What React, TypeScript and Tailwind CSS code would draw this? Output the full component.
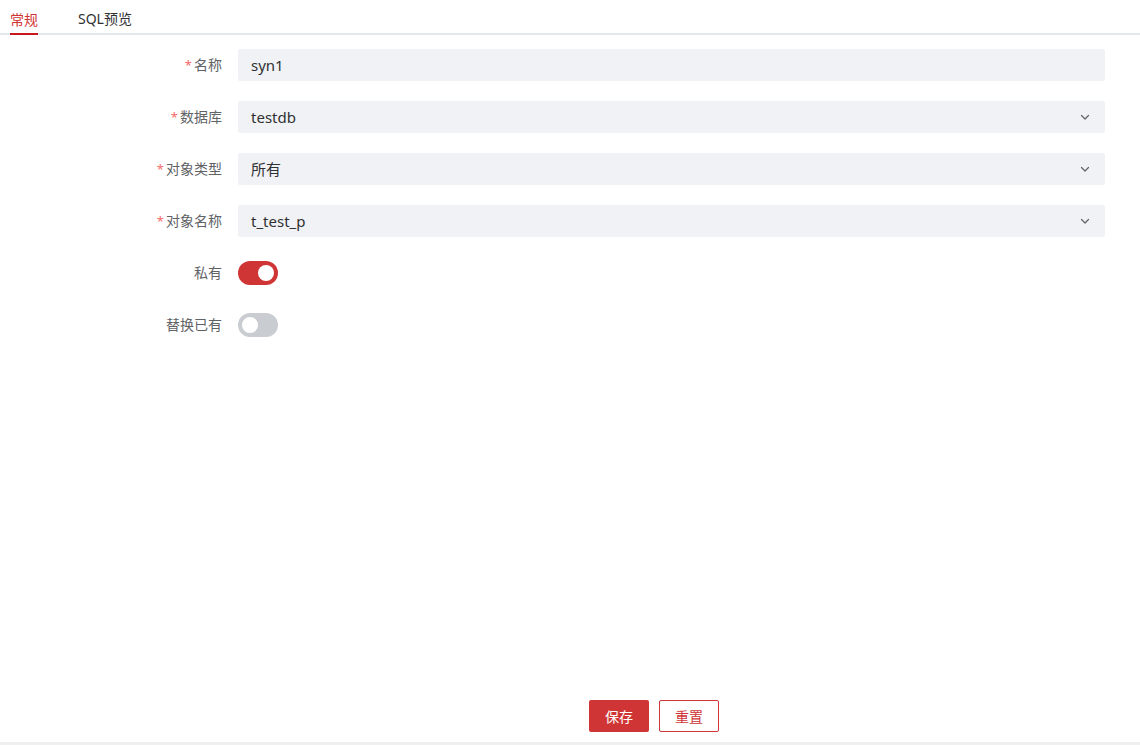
import React from "react";

const Chevron = () => (
  <svg width="12" height="12" viewBox="0 0 12 12" fill="none" className="text-[#606266]">
    <path d="M2.5 4.5 L6 8 L9.5 4.5" stroke="currentColor" strokeWidth="1.2" strokeLinecap="round" strokeLinejoin="round" />
  </svg>
);

function Label({ text, required }: { text: string; required?: boolean }) {
  return (
    <div className="w-[238px] shrink-0 pr-4 flex items-center justify-end text-[14px] text-[#606266] leading-none">
      {required && <span className="text-[#f56c6c] mr-[2px] text-[13px] leading-none">*</span>}
      {text}
    </div>
  );
}

function InputRow({ label, value, select }: { label: string; value: string; select?: boolean }) {
  return (
    <div className="flex h-[32px] mb-[20px]">
      <Label text={label} required />
      <div className="flex-1 h-[32px] bg-[#f0f2f5] rounded-[2px] flex items-center pl-[13px] pr-[14px] text-[15px] text-[#303133] leading-none">
        <span className="flex-1">{value}</span>
        {select && <Chevron />}
      </div>
    </div>
  );
}

function SwitchRow({ label, on }: { label: string; on: boolean }) {
  return (
    <div className="flex h-[32px] mb-[20px] items-center">
      <Label text={label} />
      <div
        className={
          "w-[40px] h-[24px] rounded-full flex items-center px-[4px] " +
          (on ? "bg-[#d03535] justify-end" : "bg-[#c9ccd1] justify-start")
        }
      >
        <div className="w-[16px] h-[16px] rounded-full bg-white" />
      </div>
    </div>
  );
}

export default function App() {
  return (
    <div
      className="w-[1140px] h-[745px] bg-white flex flex-col"
      style={{ fontFamily: '"Noto Sans", "Noto Sans CJK SC", sans-serif' }}
    >
      <div className="h-[35px] border-b-2 border-[#e4e7ed] flex items-end pl-[10px] gap-[40px] text-[14px]">
        <div className="h-[35px] flex items-center text-[#d03535] border-b-2 border-[#c8161d] mb-[-2px] pt-[5px]">常规</div>
        <div className="h-[35px] flex items-center text-[#303133] pt-[5px]">SQL预览</div>
      </div>
      <div className="pt-[14px] pr-[35px]">
        <InputRow label="名称" value="syn1" />
        <InputRow label="数据库" value="testdb" select />
        <InputRow label="对象类型" value="所有" select />
        <InputRow label="对象名称" value="t_test_p" select />
        <SwitchRow label="私有" on />
        <SwitchRow label="替换已有" on={false} />
      </div>
      <div className="flex-1" />
      <div className="flex justify-center gap-[10px] pl-[168px] mb-[10px]">
        <button className="w-[60px] h-[32px] bg-[#d03535] text-white text-[14px] rounded-[2px]">保存</button>
        <button className="w-[60px] h-[32px] bg-white border border-[#d03535] text-[#d03535] text-[14px] rounded-[2px]">重置</button>
      </div>
      <div className="h-[3px] bg-[#f0f0f0]" />
    </div>
  );
}
